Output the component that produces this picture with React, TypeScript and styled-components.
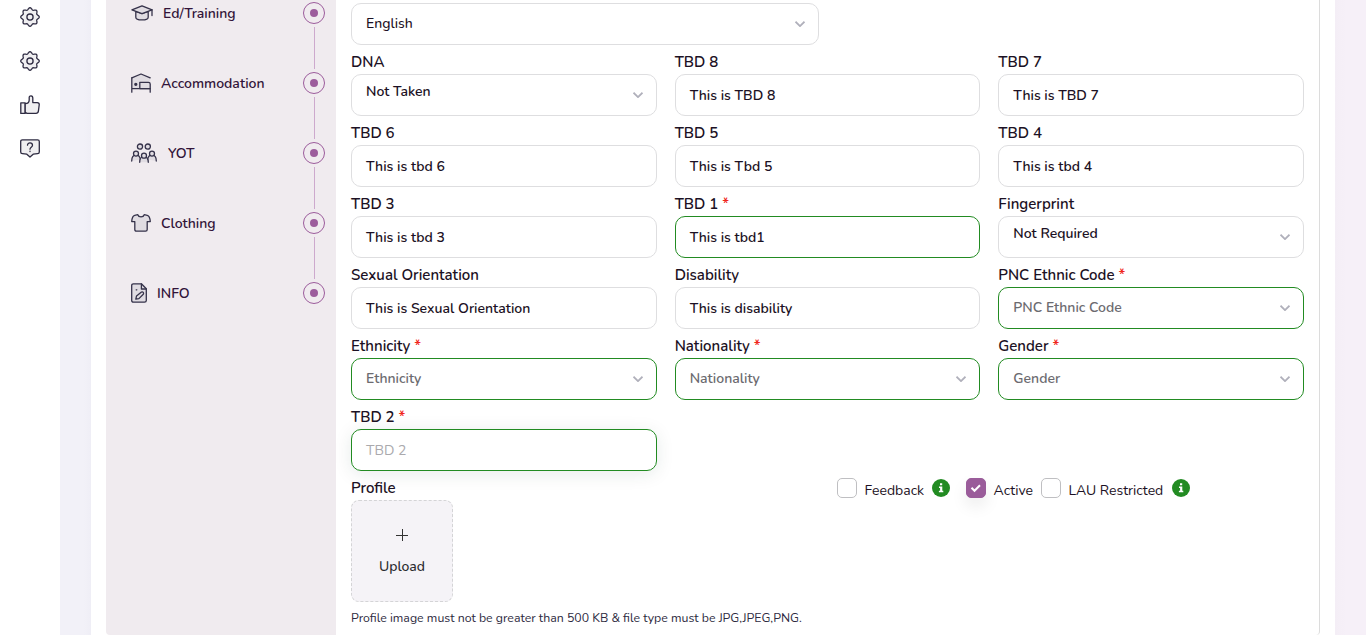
import React from 'react';
import styled, { createGlobalStyle } from 'styled-components';

const GlobalStyle = createGlobalStyle`
  * { box-sizing: border-box; }
  html, body { margin: 0; height: 100%; overflow: hidden; }
  body {
    font-family: Nunito, Lato, sans-serif;
    font-size: 14px;
    color: #1c1124;
    background: #fff;
  }
`;

const Page = styled.div`
  display: flex;
  height: 635px;
  overflow: hidden;
`;

const Rail = styled.aside`
  width: 60px;
  display: flex;
  flex-direction: column;
  align-items: center;
  gap: 24px;
  padding-top: 7px;
  background: #fff;
`;

const RailIcon = styled.svg`
  width: 20px;
  height: 20px;
  flex: none;
  fill: #f0eff1;
  stroke: #2e2b42;
  stroke-width: 1.3;
  stroke-linecap: round;
  stroke-linejoin: round;
`;

const Backdrop = styled.main`
  flex: 1;
  display: flex;
  padding: 0 31px;
  background: linear-gradient(90deg, #f2f1f8 0, #f2f1f8 24px, #efeef6 31px, #f4eef6 calc(100% - 31px), #f6f0f8 calc(100% - 20px), #f6f0f8 100%);
`;

const Card = styled.section`
  flex: 1;
  display: flex;
  padding: 0 15px;
  background: #fff;
`;

const Steps = styled.nav`
  width: 230px;
  padding: 2px 11px 0 25px;
  display: flex;
  flex-direction: column;
  background: #f0ebef;
  border-bottom-left-radius: 4px;
`;

const Step = styled.div`
  display: flex;
  align-items: center;
  height: 22px;
`;

const StepIcon = styled.svg<{ $gap: number }>`
  flex: none;
  margin-right: ${(p) => p.$gap}px;
  fill: #e0dce2;
  stroke: #35324a;
  stroke-width: 1.3;
  stroke-linecap: round;
  stroke-linejoin: round;
`;

const StepName = styled.span`
  flex: 1;
  padding-top: 2px;
  font-size: 14px;
  font-weight: 600;
  line-height: 22px;
  color: #321439;
`;

const StepDot = styled.span`
  width: 22px;
  height: 22px;
  display: grid;
  place-items: center;
  border: 1px solid #9c5c9c;
  border-radius: 50%;

  &::after {
    content: '';
    width: 8px;
    height: 8px;
    border-radius: 50%;
    background: #9c5c9c;
  }
`;

const StepLine = styled.div`
  align-self: flex-end;
  width: 1px;
  height: 42px;
  margin: 3px 10px 3px 0;
  background: #cda9cd;
`;

const FormPanel = styled.div`
  flex: 1;
  padding: 3px 15px 0;
  height: 635px;
  border-right: 1px solid #dcdcdc;
  border-bottom-right-radius: 4px;
`;

const Grid = styled.div`
  display: grid;
  grid-template-columns: repeat(3, 1fr);
  column-gap: 18px;
`;

const Label = styled.div`
  height: 29px;
  padding-top: 5px;
  font-size: 15px;
  font-weight: 600;
  line-height: 24px;
`;

const Star = styled.span`
  color: #f0261b;
`;

const Control = styled.div<{ $green?: boolean; $raised?: boolean; $width?: number }>`
  display: flex;
  justify-content: space-between;
  width: ${(p) => (p.$width ? `${p.$width}px` : 'auto')};
  height: 42px;
  padding: 0 13px 0 14px;
  border: 1px solid ${(p) => (p.$green ? '#228b22' : '#dedee0')};
  border-radius: 10px;
  background: #fff;
  box-shadow: ${(p) => (p.$raised ? '0 3px 18px rgba(20, 60, 50, 0.1)' : 'none')};
`;

const Value = styled.span<{ $top: number; $tone?: string; $weight?: number }>`
  padding-top: ${(p) => p.$top}px;
  font-size: 14px;
  font-weight: ${(p) => p.$weight ?? 600};
  line-height: 20px;
  color: ${(p) => p.$tone ?? '#1c1124'};
`;

const Chevron = styled.svg`
  width: 10px;
  height: 6px;
  margin-top: 17px;
  fill: none;
  stroke: #b0b0bb;
  stroke-width: 1.8;
`;

const ProfileRow = styled.div`
  display: flex;
  justify-content: space-between;
`;

const Upload = styled.div`
  width: 102px;
  height: 102px;
  display: flex;
  flex-direction: column;
  align-items: center;
  padding-top: 28px;
  gap: 16px;
  border: 1px dashed #d4d4d6;
  border-radius: 8px;
  background: #f5f3f7;
  font-weight: 500;
  line-height: 20px;
  color: #2b2b2f;
`;

const Plus = styled.svg`
  width: 12px;
  height: 12px;
  stroke: #333;
  stroke-width: 1;
`;

const Checks = styled.div`
  display: flex;
  height: 20px;
  margin: 7px 114px 0 0;
`;

const Box = styled.span<{ $on?: boolean }>`
  width: 20px;
  height: 20px;
  display: grid;
  place-items: center;
  border: 1px solid ${(p) => (p.$on ? '#9a5c9a' : '#bfbfc2')};
  border-radius: 5px;
  background: ${(p) => (p.$on ? '#9a5c9a' : '#fff')};
  box-shadow: ${(p) => (p.$on ? '0 8px 16px rgba(0, 0, 0, 0.08)' : 'none')};
`;

const CheckText = styled.span<{ $width: number }>`
  width: ${(p) => p.$width}px;
  padding: 3px 0 0 7.6px;
  line-height: 20px;
  white-space: nowrap;
`;

const InfoMark = styled.svg<{ $gap?: number }>`
  width: 18px;
  height: 18px;
  margin: 1px ${(p) => p.$gap ?? 0}px 0 0;
`;

const Note = styled.p`
  margin: 7px 0 0;
  font-size: 12.32px;
  line-height: 18px;
  color: #2d2a40;
`;

// Outline of an eight-lobed cog centred in a 20px box
const cogPoints = Array.from({ length: 96 }, (_, i) => {
  const a = (i / 96) * Math.PI * 2;
  const r = 8.3 + 0.95 * Math.cos(8 * a);
  return `${(10 + r * Math.cos(a)).toFixed(2)},${(10 + r * Math.sin(a)).toFixed(2)}`;
}).join(' ');

const Gear = () => (
  <RailIcon viewBox="0 0 20 20">
    <polygon points={cogPoints} />
    <circle cx="10" cy="10.1" r="3.1" />
  </RailIcon>
);

const Info = ({ gap }: { gap?: number }) => (
  <InfoMark $gap={gap} viewBox="0 0 18 18">
    <circle cx="9" cy="9" r="9" fill="#228b22" />
    <path d="M8 4.2h2.2v2.1H8zM7 7.4h3.3v4.3h1v1.6H6.9v-1.6h1.2V9H7z" fill="#fff" />
  </InfoMark>
);

type FieldProps = {
  label: string;
  value: string;
  required?: boolean;
  select?: boolean;
  kind?: 'filled' | 'empty';
  raised?: boolean;
};

const Field = ({ label, value, required, select, kind = 'filled', raised }: FieldProps) => {
  const empty = kind === 'empty';
  const top = select ? (empty ? 10 : 7) : 11;
  return (
    <div>
      <Label>
        {label}
        {required && <Star> *</Star>}
      </Label>
      <Control $green={required} $raised={raised}>
        <Value $top={top} $tone={empty ? (select ? '#6c6b70' : '#aaa9ad') : undefined} $weight={raised ? 400 : 600}>
          {value}
        </Value>
        {select && (
          <Chevron viewBox="0 0 10 6">
            <path d="M.5.7 5 5.1 9.5.7" />
          </Chevron>
        )}
      </Control>
    </div>
  );
};

const steps = [
  {
    name: 'Ed/Training', w: 22, gap: 10,
    art: <><path d="M4.8 8.4v5.8c0 3.6 12.4 3.6 12.4 0V8.4L11 10.7z" /><path d="M.9 6.8 11 2.8l10.1 4L11 10.7z" /><path d="M21 6.8v5.8" fill="none" /></>,
  },
  {
    name: 'Accommodation', w: 20, gap: 10,
    art: <><path d="M.8 4.8 10 1l9.2 3.8v10.8H.8z" stroke="none" /><path d="M.8 4.8 10 1l9.2 3.8" fill="none" /><path d="M.8 4.8v14.4M19.2 19.2v-3.6H.8" fill="none" /><path d="M8.8 9.3h8.6q1.8 0 1.8 1.8v4.5H8.8z" /><circle cx="4.8" cy="11.3" r="1" fill="#2e2b42" /></>,
  },
  {
    name: 'YOT', w: 26, gap: 11,
    art: <><circle cx="9" cy="3.6" r="2.6" /><circle cx="16.8" cy="3.6" r="2.6" /><path d="M.7 18c0-7.8 8.3-7.8 8.6-1.5M25.3 18c0-7.8-8.3-7.8-8.6-1.5" /><circle cx="5" cy="10.6" r="2.5" /><circle cx="21" cy="10.6" r="2.5" /><path d="M8.7 19.3c0-7.8 8.6-7.8 8.6 0" /><circle cx="13" cy="12.7" r="2.5" /></>,
  },
  {
    name: 'Clothing', w: 20, gap: 10,
    art: <path d="M6.8 1.7c.8 2.8 5.6 2.8 6.4 0l3.1.7c1.9.5 2.7 2.2 3 6.2h-3.1v8q0 1.6-1.6 1.6H5.4q-1.6 0-1.6-1.6v-8H.7c.3-4 1.1-5.7 3-6.2z" />,
  },
  {
    name: 'INFO', w: 16, gap: 10,
    art: <><path d="M2.4.8h8l4.9 5v11.6q0 1.8-1.8 1.8H2.5Q.7 19.2.7 17.4V2.6Q.7.8 2.4.8z" /><path d="M10.4 1v5h4.8" fill="none" /><path d="m4.8 16.2.7-3.1 5-4.1c1.5-.5 2.6.9 1.8 2.2l-4.4 4.4z" /><path d="M5.2 6.8h.6" /></>,
  },
];

const fields: FieldProps[] = [
  { label: 'DNA', value: 'Not Taken', select: true },
  { label: 'TBD 8', value: 'This is TBD 8' },
  { label: 'TBD 7', value: 'This is TBD 7' },
  { label: 'TBD 6', value: 'This is tbd 6' },
  { label: 'TBD 5', value: 'This is Tbd 5' },
  { label: 'TBD 4', value: 'This is tbd 4' },
  { label: 'TBD 3', value: 'This is tbd 3' },
  { label: 'TBD 1', value: 'This is tbd1', required: true },
  { label: 'Fingerprint', value: 'Not Required', select: true },
  { label: 'Sexual Orientation', value: 'This is Sexual Orientation' },
  { label: 'Disability', value: 'This is disability' },
  { label: 'PNC Ethnic Code', value: 'PNC Ethnic Code', required: true, select: true, kind: 'empty' },
  { label: 'Ethnicity', value: 'Ethnicity', required: true, select: true, kind: 'empty' },
  { label: 'Nationality', value: 'Nationality', required: true, select: true, kind: 'empty' },
  { label: 'Gender', value: 'Gender', required: true, select: true, kind: 'empty' },
  { label: 'TBD 2', value: 'TBD 2', required: true, kind: 'empty', raised: true },
];

export default function App() {
  return (
    <Page>
      <GlobalStyle />
      <Rail>
        <Gear />
        <Gear />
        <RailIcon viewBox="0 0 20 20">
          <path d="M.8 7.8h4.4v10.6H.8z" />
          <path d="M5.2 8.6c2.2 0 4-1.2 4-3.6V2.6c0-2.4 3.6-2.4 3.6.4v4.6h4.4c1.5 0 2.2 1 2 2.4l-.8 6.2c-.2 1.4-1 2.2-2.4 2.2H7l-1.8-1z" />
        </RailIcon>
        <RailIcon viewBox="0 0 20 20">
          <path d="M2.4.9h15.2q1.7 0 1.7 1.7v10.3q0 1.7-1.7 1.8l-4.4.5L10 18.1l-3.2-2.9-4.4-.5Q.7 14.6.7 12.9V2.6Q.7.9 2.4.9z" />
          <path d="M7.5 6.2c0-3.2 5-3 5 0 0 2.2-2.5 1.9-2.5 4M10 12.2v.3" fill="none" />
        </RailIcon>
      </Rail>
      <Backdrop>
        <Card>
          <Steps>
            {steps.map((s, i) => (
              <React.Fragment key={s.name}>
                {i > 0 && <StepLine />}
                <Step>
                  <StepIcon $gap={s.gap} width={s.w} height={20} viewBox={`0 0 ${s.w} 20`}>
                    {s.art}
                  </StepIcon>
                  <StepName>{s.name}</StepName>
                  <StepDot />
                </Step>
              </React.Fragment>
            ))}
          </Steps>
          <FormPanel>
            <Control $width={468}>
              <Value $top={10} $weight={500}>English</Value>
              <Chevron viewBox="0 0 10 6">
                <path d="M.5.7 5 5.1 9.5.7" />
              </Chevron>
            </Control>
            <Grid>
              {fields.map((f) => (
                <Field key={f.label} {...f} />
              ))}
            </Grid>
            <ProfileRow>
              <div>
                <Label>Profile</Label>
                <Upload>
                  <Plus viewBox="0 0 12 12">
                    <path d="M6.5 0v12M0 6.5h12" />
                  </Plus>
                  Upload
                </Upload>
              </div>
              <Checks>
                <Box />
                <CheckText $width={75}>Feedback</CheckText>
                <Info gap={16} />
                <Box $on>
                  <svg width="12" height="10" viewBox="0 0 12 10">
                    <path d="m1.5 4.8 3 3 5.5-5.6" fill="none" stroke="#fff" strokeWidth="2" />
                  </svg>
                </Box>
                <CheckText $width={55}>Active</CheckText>
                <Box />
                <CheckText $width={111}>LAU Restricted</CheckText>
                <Info />
              </Checks>
            </ProfileRow>
            <Note>Profile image must not be greater than 500 KB &amp; file type must be JPG,JPEG,PNG.</Note>
          </FormPanel>
        </Card>
      </Backdrop>
    </Page>
  );
}
